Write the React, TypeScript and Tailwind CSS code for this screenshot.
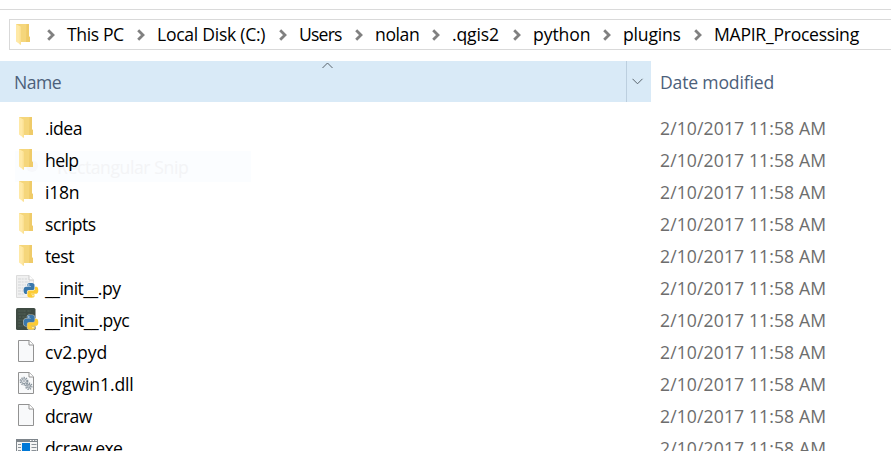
import React from "react";

type IconKind = "folder" | "py" | "pyc" | "blank" | "dll" | "exe";

const crumbs = [
  { label: "This PC", box: "w-[90px]", track: "tracking-[-0.4px]" },
  { label: "Local Disk (C:)", box: "w-[142px]", track: "tracking-[-0.28px]" },
  { label: "Users", box: "w-[76px]", track: "tracking-[-0.8px]" },
  { label: "nolan", box: "w-[77px]", track: "tracking-[-0.4px]" },
  { label: ".qgis2", box: "w-[81px]", track: "tracking-[-0.15px]" },
  { label: "python", box: "w-[90px]", track: "tracking-[-0.1px]" },
  { label: "plugins", box: "w-[91px]", track: "tracking-[-0.2px]" },
  { label: "MAPIR_Processing", box: "w-[190px]", track: "tracking-[-0.27px]" },
];

const files: { name: string; icon: IconKind; track: string }[] = [
  { name: ".idea", icon: "folder", track: "tracking-[-0.5px]" },
  { name: "help", icon: "folder", track: "tracking-[-0.6px]" },
  { name: "i18n", icon: "folder", track: "tracking-[-0.3px]" },
  { name: "scripts", icon: "folder", track: "tracking-[-0.45px]" },
  { name: "test", icon: "folder", track: "tracking-[-0.4px]" },
  { name: "__init__.py", icon: "py", track: "tracking-[-0.5px]" },
  { name: "__init__.pyc", icon: "pyc", track: "tracking-[-0.42px]" },
  { name: "cv2.pyd", icon: "blank", track: "tracking-[0px]" },
  { name: "cygwin1.dll", icon: "dll", track: "tracking-[-0.12px]" },
  { name: "dcraw", icon: "blank", track: "tracking-[-0.6px]" },
  { name: "dcraw.exe", icon: "exe", track: "tracking-[-0.7px]" },
];

function FolderShape() {
  return (
    <g>
      <path d="M3 1H16V13.5L17 14V19H7L3 17Z" fill="#f5d67b" />
      <path d="M13.5 1H16V13.5L17 14V19H13Z" fill="#efcb69" />
      <path d="M3 1L8 4V22L3 18.5Z" fill="#ffe9a6" />
      <path d="M7.2 4V21.5" stroke="#f9dc8c" strokeWidth="1" />
    </g>
  );
}

// One snake of the Python logo; the second is the same shape turned half a circle.
const SNAKE =
  "M14.25.18l.9.2.73.26.59.3.45.32.34.34.25.34.16.33.1.3.04.26.02.2-.01.13V8.5l-.05.63-.13.55-.21.46-.26.38-.3.31-.33.25-.35.19-.35.14-.33.1-.3.07-.26.04-.21.02H8.77l-.69.05-.59.14-.5.22-.41.27-.33.32-.27.35-.2.36-.15.37-.1.35-.07.32-.04.27-.02.21v3.06H3.17l-.21-.03-.28-.07-.32-.12-.35-.18-.36-.26-.36-.36-.35-.46-.32-.59-.28-.73-.21-.88-.14-1.05-.05-1.23.06-1.22.16-1.04.24-.87.32-.71.36-.57.4-.44.42-.33.42-.24.4-.16.36-.1.32-.05.24-.01h.16l.06.01h8.16v-.83H6.18l-.01-2.75-.02-.37.05-.34.11-.31.17-.28.25-.26.31-.23.38-.2.44-.18.51-.15.58-.12.64-.1.71-.06.77-.04.84-.02 1.27.05z";

function PythonMark() {
  return (
    <g transform="translate(8.6 7) scale(.61)">
      <g stroke="#fff" strokeWidth="2" strokeLinejoin="round" fill="#fff" opacity="0.6">
        <path d={SNAKE} />
        <path d={SNAKE} transform="rotate(180 12 12)" />
      </g>
      <path d={SNAKE} fill="#3a77ab" />
      <path d={SNAKE} fill="#fccb35" transform="rotate(180 12 12)" />
      <circle cx="8.6" cy="3.3" r="1.1" fill="#fff" />
      <circle cx="15.4" cy="20.7" r="1.1" fill="#fff" />
    </g>
  );
}

function Gear({ cx, cy, r }: { cx: number; cy: number; r: number }) {
  return (
    <g fill="none" stroke="#89949d">
      <circle cx={cx} cy={cy} r={r} strokeWidth="1.6" strokeDasharray="1.3 1" />
      <circle cx={cx} cy={cy} r={r - 1.2} strokeWidth="1" />
      <circle cx={cx} cy={cy} r="0.8" strokeWidth="0.7" />
    </g>
  );
}

function FileIcon({ kind }: { kind: IconKind }) {
  return (
    <svg width="24" height="24" viewBox="0 0 24 24" className="shrink-0 overflow-visible">
      {kind === "folder" && (
        <g transform="translate(1 0)"><FolderShape /></g>
      )}
      {kind === "py" && (
        <g>
          <path d="M1.5 -.5h12.5l4.5 4.5v17.5h-17z" fill="#f0f0f0" stroke="#dcdcdc" />
          <path d="M14 -.5v4.5h4.5" fill="#fff" stroke="#cacaca" />
          <path d="M3 3h9M3 6h12M3 9h8M3 12h6M3 15h5M3 18h6" stroke="#d3d5d7" strokeDasharray="3 .7 2 1" />
          <PythonMark />
        </g>
      )}
      {kind === "pyc" && (
        <g>
          <rect x="1" y="0" width="19.5" height="22" rx="1.5" fill="#3f4b43" />
          <path d="M3 3h13M3 6h9M4 9h7M3 12h5M3 15h4M3 18h6M5 2v18M9 2v10M14 2v6" stroke="#526155" strokeWidth="0.8" strokeDasharray="2 1" />
          <PythonMark />
        </g>
      )}
      {(kind === "blank" || kind === "dll") && (
        <g transform="translate(1 0)">
          <path d="M2.5 .5h10.7l4.3 4.3v16.7h-15z" fill="#f8f9fa" stroke="#929292" />
          <path d="M13 .5v4.5h4.5" fill="#fff" stroke="#929292" />
          {kind === "dll" && (
            <g>
              <Gear cx={8} cy={9.2} r={3.6} />
              <Gear cx={12.8} cy={14.2} r={3} />
            </g>
          )}
        </g>
      )}
      {kind === "exe" && (
        <g transform="translate(1 1)">
          <rect x="0.5" y="2.5" width="21" height="18" fill="#f5f5f5" stroke="#7e858b" />
          <rect x="0" y="2" width="22" height="3" fill="#7e858b" />
          <path d="M14 3.5h1.5M16.7 3.5h1.5M19.3 3.5h1.5" stroke="#fff" />
          <rect x="6" y="6" width="8" height="10" fill="#0078d7" />
          <path d="M2 7.5h3M2 10.5h3M2 13.5h3M15.5 7.5h5M15.5 10.5h5M15.5 13.5h5" stroke="#8b9298" />
        </g>
      )}
    </svg>
  );
}

export default function App() {
  return (
    <div className="h-[451px] w-[891px] overflow-hidden bg-white font-['Open_Sans','Noto_Sans',sans-serif] text-[17.6px] leading-8 text-black">
      <div className="h-[9px]" />
      <div className="h-px bg-[#dadada]" />
      <div className="mt-[9px] ml-[9px] flex h-[31px] items-center border border-r-0 border-[#d9d9d9]">
        <svg width="24" height="24" viewBox="0 0 24 24" className="mr-[10px] ml-[3px] shrink-0"><FolderShape /></svg>
        {crumbs.map((c) => (
          <div key={c.label} className={`flex shrink-0 items-center ${c.box}`}>
            <svg width="8" height="12" viewBox="0 0 8 12" className="mr-[12px] shrink-0">
              <path d="M1.2 1.2L6 6L1.2 10.8" fill="none" stroke="#808080" strokeWidth="2.8" />
            </svg>
            <span className={`-mt-[2px] whitespace-nowrap ${c.track}`}>{c.label}</span>
          </div>
        ))}
      </div>
      <div className="mt-[11px] flex h-[41px] text-[#4c607a]">
        <div className="relative flex w-[626px] items-center bg-[#d9eaf7] pl-[14px]">
          <span className="tracking-[-0.5px]">Name</span>
          <svg width="12" height="7" viewBox="0 0 12 7" className="absolute top-px left-[322px]">
            <path d="M.5 6L5.5 1L10.5 6" fill="none" stroke="#59636b" />
          </svg>
        </div>
        <div className="flex w-[25px] items-center justify-center border-l border-[#bccfdf] bg-[#d9eaf7]">
          <svg width="12" height="7" viewBox="0 0 12 7" className="-mt-[1px] mr-[3px]">
            <path d="M.5 .8L5.5 5.8L10.5 .8" fill="none" stroke="#59636b" />
          </svg>
        </div>
        <div className="flex items-center pl-[9px]">
          <span className="whitespace-nowrap tracking-[-0.18px]">Date modified</span>
        </div>
      </div>
      <div className="relative pt-[11px]">
        <div className="absolute top-[49px] left-[15px] flex h-[31px] w-[236px] items-center bg-[#fbfdff] pl-[42px] text-[#f3f4f6]">
          <span className="absolute top-[9px] left-[11px] h-3 w-3 rounded-full bg-[#f7f8fb]" />
          <span className="whitespace-nowrap tracking-[-0.42px]">Rectangular Snip</span>
        </div>
        {files.map((f) => (
          <div key={f.name} className="relative flex h-8">
            <div className="flex w-[660px] pt-[3px] pl-[15px]">
              <FileIcon kind={f.icon} />
              <span className={`-mt-[4px] ml-[6px] whitespace-nowrap ${f.track}`}>{f.name}</span>
            </div>
            <span className="-mt-px whitespace-nowrap tracking-[0.1px] text-[#6d6d6d]">2/10/2017 11:58 AM</span>
          </div>
        ))}
      </div>
    </div>
  );
}
